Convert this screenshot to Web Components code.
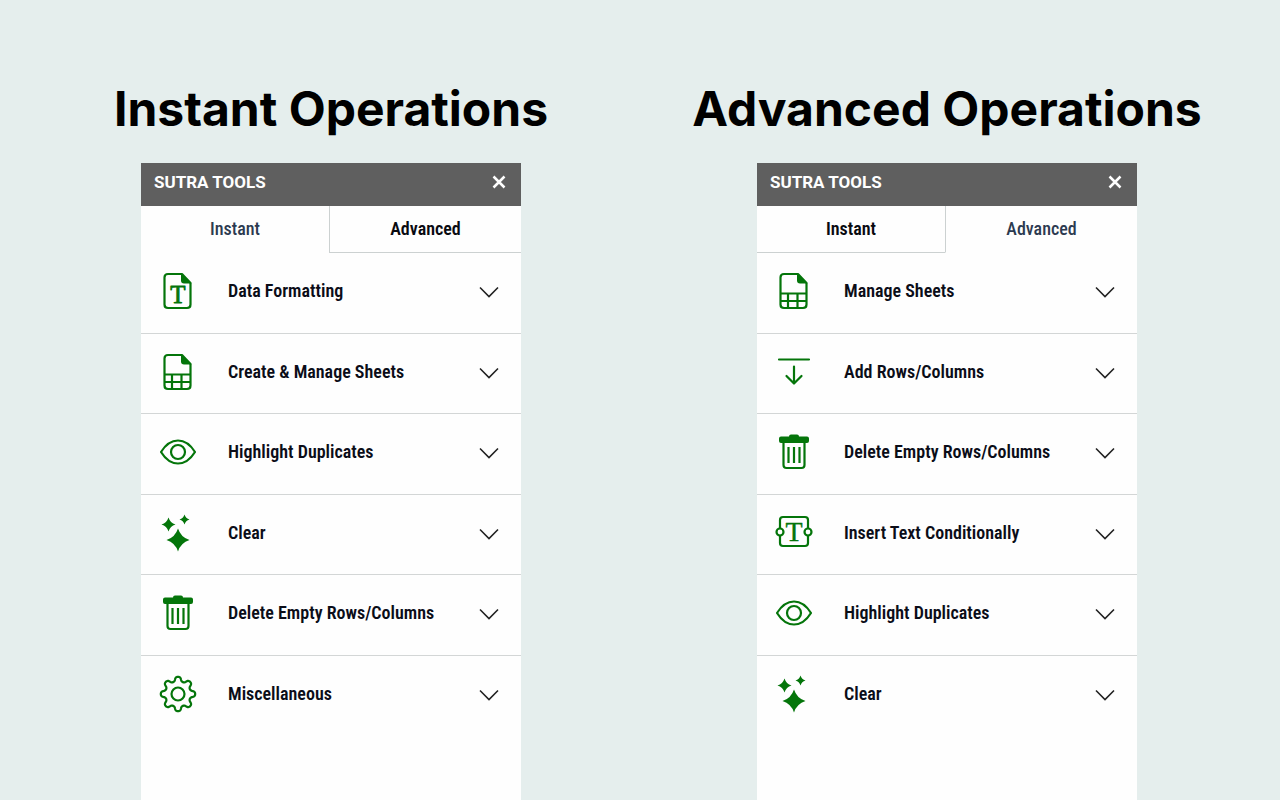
<!DOCTYPE html>
<html lang="en">
<head>
<meta charset="utf-8">
<meta name="viewport" content="width=device-width, initial-scale=1">
<title>Sutra Tools</title>
<style>
    body {
        margin: 0;
        background: #e5eeed;
        font-family: "Roboto Condensed", Roboto, "Liberation Sans", sans-serif;
    }

    main {
        display: grid;
        grid-template-columns: repeat(auto-fit, minmax(520px, 1fr));
        min-height: 100vh;
        box-sizing: border-box;
        padding: 80px 25px 0 23px;
    }
</style>
</head>
<body>
<main>
    <operations-column heading="Instant Operations">
        <tool-panel active="instant">
            <tool-row icon="text">Data Formatting</tool-row>
            <tool-row icon="sheet">Create &amp; Manage Sheets</tool-row>
            <tool-row icon="eye">Highlight Duplicates</tool-row>
            <tool-row icon="sparkles">Clear</tool-row>
            <tool-row icon="trash">Delete Empty Rows/Columns</tool-row>
            <tool-row icon="gear">Miscellaneous</tool-row>
        </tool-panel>
    </operations-column>
    <operations-column heading="Advanced Operations">
        <tool-panel active="advanced">
            <tool-row icon="sheet">Manage Sheets</tool-row>
            <tool-row icon="add">Add Rows/Columns</tool-row>
            <tool-row icon="trash">Delete Empty Rows/Columns</tool-row>
            <tool-row icon="insert">Insert Text Conditionally</tool-row>
            <tool-row icon="eye">Highlight Duplicates</tool-row>
            <tool-row icon="sparkles">Clear</tool-row>
        </tool-panel>
    </operations-column>
</main>

<script>
const page = 'M10 3 H24 L32.5 12 V33.5 Q32.5 37 29 37 H10 Q6.5 37 6.5 33.5 V6.5 Q6.5 3 10 3 Z';
const fold = '<path fill="currentColor" stroke="none" d="M23 2 L33.5 12.5 H26 Q23 12.5 23 9.5 Z"/>';

// Four pointed star with curved sides.
function star(x, y, r) {
    const k = r * 0.24;
    return `<path fill="currentColor" stroke="none" d="M${x} ${y - r} Q${x + k} ${y - k} ${x + r} ${y}
        Q${x + k} ${y + k} ${x} ${y + r} Q${x - k} ${y + k} ${x - r} ${y} Q${x - k} ${y - k} ${x} ${y - r} Z"/>`;
}

// Eight rounded teeth around the centre of the 40x40 box.
function gearPath() {
    const points = [];
    for (let i = 0; i < 160; i++) {
        const a = i / 160 * Math.PI * 2;
        const r = 15 + 2.2 * Math.cos(8 * a);
        const t = a + 0.03 * Math.sin(16 * a);
        points.push((20 + r * Math.cos(t)).toFixed(2) + ' ' + (20 + r * Math.sin(t)).toFixed(2));
    }
    return 'M' + points.join('L') + 'Z';
}

const icons = {
    text: `<path d="${page}"/>${fold}
        <text x="20" y="31.5" font-size="25" text-anchor="middle" style="stroke: currentColor; stroke-width: 0.8">T</text>`,
    sheet: `<path d="${page}"/>${fold}<path d="M6.5 22.5 H32.5 M6.5 30 H32.5 M14 22.5 V37 M23.5 22.5 V37"/>`,
    eye: `<path d="M3 20 C8 12 13.5 8.5 20 8.5 S32 12 37 20 C32 28 26.5 31.5 20 31.5 S8 28 3 20 Z"/>
        <circle cx="20" cy="20" r="7"/>`,
    sparkles: star(20, 27, 11.5) + star(10.5, 11.5, 7) + star(26.5, 6.5, 5),
    trash: `<path fill="currentColor" stroke="none" d="M15 4.5 Q15 2.5 17 2.5 H23 Q25 2.5 25 4.5
        H33 Q35 4.5 35 6.5 V9 Q35 11 33 11 H7 Q5 11 5 9 V6.5 Q5 4.5 7 4.5 Z"/>
        <path d="M9.5 10 V33 Q9.5 36 12.5 36 H27.5 Q30.5 36 30.5 33 V10 M14.5 15 V31 M20 15 V31 M25.5 15 V31"/>`,
    gear: `<path d="${gearPath()}"/><circle cx="20" cy="20" r="6.5"/>`,
    add: `<path stroke-linecap="round" d="M5 7.5 H35 M20 14.5 V31 M12.5 24 L20 31.5 L27.5 24"/>`,
    insert: `<rect x="6" y="4" width="28" height="29" rx="3"/>
        <circle cx="6" cy="19" r="3.5" fill="white"/><circle cx="34" cy="19" r="3.5" fill="white"/>
        <text x="20" y="28" font-size="28" text-anchor="middle" style="stroke: currentColor; stroke-width: 0.4">T</text>`
};

class ToolIcon extends HTMLElement {
    constructor() {
        super();
        this.attachShadow({ mode: 'open' });
    }

    connectedCallback() {
        this.shadowRoot.innerHTML = `
            <style>
                :host {
                    display: block;
                    flex: none;
                    color: #04750a;
                }

                svg {
                    display: block;
                    fill: none;
                    stroke: currentColor;
                    stroke-width: 2.2;
                    stroke-linejoin: round;
                }

                text {
                    fill: currentColor;
                    stroke: none;
                    font-family: "Liberation Serif", serif;
                    font-weight: normal;
                }
            </style>
            <svg width="40" height="40" viewBox="0 0 40 40" aria-hidden="true">${icons[this.getAttribute('name')]}</svg>
        `;
    }
}

class ToolRow extends HTMLElement {
    constructor() {
        super();
        this.attachShadow({ mode: 'open' });
    }

    connectedCallback() {
        this.shadowRoot.innerHTML = `
            <style>
                :host {
                    display: flex;
                    border-bottom: 1px solid #d3d6d6;
                }

                :host(:last-child) {
                    border-bottom-color: transparent;
                }

                button {
                    flex: 1;
                    display: flex;
                    align-items: center;
                    gap: 30px;
                    min-width: 0;
                    padding: 0 22px 4px 17px;
                    border: 0;
                    background: none;
                    color: #0b0d18;
                    font: inherit;
                    font-size: 18px;
                    font-weight: 600;
                    line-height: 24px;
                    text-align: left;
                    cursor: pointer;
                }

                .label {
                    flex: 1;
                    white-space: nowrap;
                }

                .chevron {
                    flex: none;
                    padding-top: 2px;
                    fill: none;
                    stroke: #222;
                    stroke-width: 1.6;
                }
            </style>
            <button type="button" aria-expanded="false">
                <tool-icon name="${this.getAttribute('icon')}"></tool-icon>
                <span class="label"><slot></slot></span>
                <svg class="chevron" width="20" height="12" viewBox="0 0 20 12" aria-hidden="true">
                    <path d="M1 1.5 L10 10.5 L19 1.5"/>
                </svg>
            </button>
        `;
    }
}

class ToolPanel extends HTMLElement {
    constructor() {
        super();
        this.attachShadow({ mode: 'open' });
    }

    connectedCallback() {
        const active = this.getAttribute('active');
        this.shadowRoot.innerHTML = `
            <style>
                :host {
                    display: block;
                    background: #fefefe;
                }

                header {
                    display: flex;
                    align-items: center;
                    justify-content: space-between;
                    height: 43px;
                    box-sizing: border-box;
                    padding: 0 14px 5px 13px;
                    background: #5f5f5f;
                    color: white;
                }

                h2 {
                    margin: 0;
                    font-family: Roboto, "Liberation Sans", sans-serif;
                    font-size: 17px;
                    font-weight: 700;
                    line-height: 24px;
                }

                .close {
                    display: flex;
                    padding: 0;
                    border: 0;
                    background: none;
                    color: inherit;
                }

                .close svg {
                    stroke: currentColor;
                    stroke-width: 2.5;
                }

                .tabs {
                    display: grid;
                    grid-template-columns: 47fr 48fr;
                    height: 47px;
                }

                .tabs button {
                    padding: 0;
                    border: 0 solid #ccd1d1;
                    border-bottom-width: 1px;
                    background: #fefefe;
                    color: #090a10;
                    font: inherit;
                    font-size: 18px;
                    font-weight: 600;
                    line-height: 24px;
                }

                .tabs button:last-child {
                    border-left-width: 1px;
                }

                .tabs button[aria-selected="true"] {
                    border-bottom-color: transparent;
                    color: #2c3a50;
                    font-weight: 500;
                }

                .rows {
                    display: grid;
                    grid-auto-rows: 81px 80px;
                }
            </style>
            <header>
                <h2>SUTRA TOOLS</h2>
                <button class="close" type="button" aria-label="Close">
                    <svg width="16" height="16" viewBox="0 0 16 16"><path d="M2.5 2.5 L13.5 13.5 M13.5 2.5 L2.5 13.5"/></svg>
                </button>
            </header>
            <div class="tabs" role="tablist">
                <button type="button" role="tab" aria-selected="${active === 'instant'}">Instant</button>
                <button type="button" role="tab" aria-selected="${active === 'advanced'}">Advanced</button>
            </div>
            <div class="rows"><slot></slot></div>
        `;
    }
}

class OperationsColumn extends HTMLElement {
    constructor() {
        super();
        this.attachShadow({ mode: 'open' });
    }

    connectedCallback() {
        this.shadowRoot.innerHTML = `
            <style>
                :host {
                    display: flex;
                    flex-direction: column;
                    align-items: center;
                }

                h1 {
                    margin: 0 0 25px;
                    color: black;
                    font-family: Inter, "Liberation Sans", sans-serif;
                    font-size: 48px;
                    font-weight: 700;
                    line-height: 58px;
                    white-space: nowrap;
                }

                ::slotted(tool-panel) {
                    flex: 1;
                    width: 100%;
                    max-width: 380px;
                }
            </style>
            <h1>${this.getAttribute('heading')}</h1>
            <slot></slot>
        `;
    }
}

customElements.define('tool-icon', ToolIcon);
customElements.define('tool-row', ToolRow);
customElements.define('tool-panel', ToolPanel);
customElements.define('operations-column', OperationsColumn);
</script>
</body>
</html>
